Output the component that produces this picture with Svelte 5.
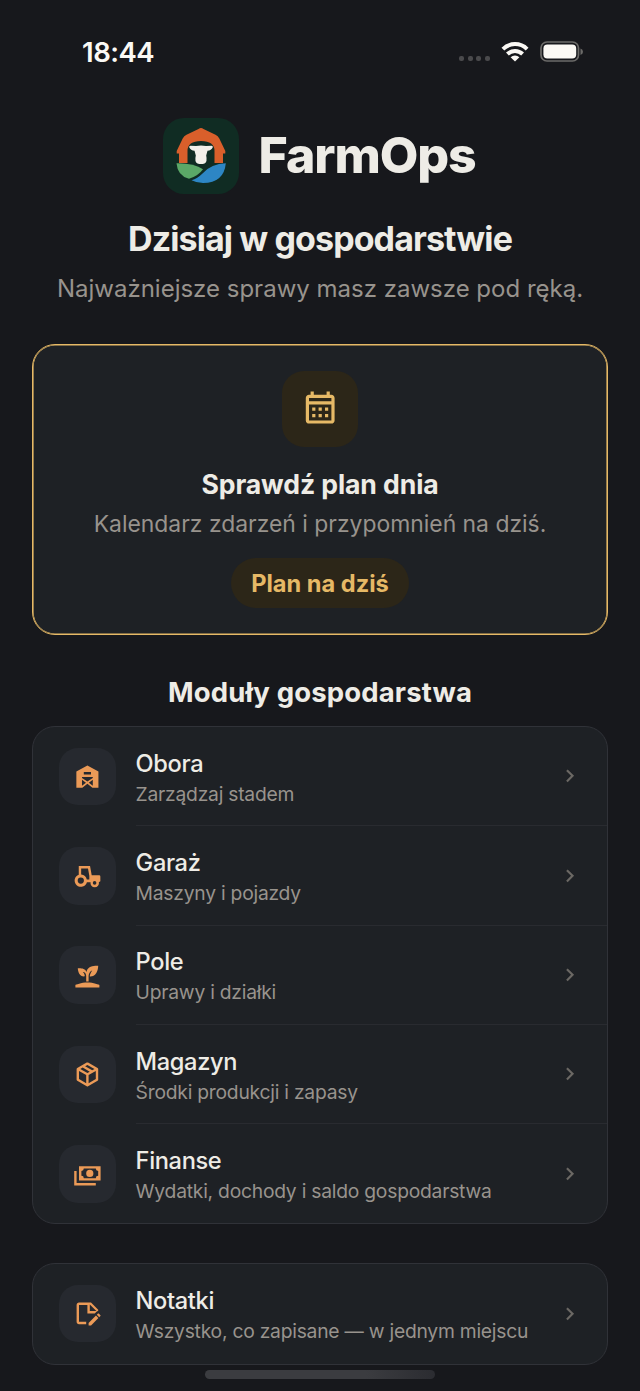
<script lang="ts">
	interface Module {
		title: string;
		subtitle: string;
		icon: string;
	}

	const calendarIcon =
		'M7 11H9V13H7V11M21 5V19C21 20.11 20.11 21 19 21H5C3.89 21 3 20.1 3 19V5C3 3.9 3.9 3 5 3H6V1H8V3H16V1H18V3H19C20.11 3 21 3.9 21 5M5 7H19V5H5V7M19 19V9H5V19H19M15 13V11H17V13H15M11 13V11H13V13H11M7 15H9V17H7V15M15 17V15H17V17H15M11 17V15H13V17H11Z';
	const chevronIcon = 'M8.59,16.58L13.17,12L8.59,7.41L10,6L16,12L10,18L8.59,16.58Z';

	const modules: Module[] = [
		{
			title: 'Obora',
			subtitle: 'Zarządzaj stadem',
			icon: 'M12 3L2.8 8V21.5H21.2V8L12 3M9 8.4H15V10.4H9V8.4M7.5 12.6H16.5V13.4L12 16.2L7.5 13.4V12.6M7.5 14.8L10.8 17.2L7.5 19.8V14.8M16.5 14.8V19.8L13.2 17.2L16.5 14.8M12 18.2L16.2 21.5H7.8L12 18.2Z'
		},
		{
			title: 'Garaż',
			subtitle: 'Maszyny i pojazdy',
			icon: 'M4.8 3.4V10.6A5.2 5.2 0 1 0 11.6 16.8H14.7A3.5 3.5 0 1 0 21.5 16.8L22.8 16V12A1 1 0 0 0 21.8 11H15.6L14.2 3.4H4.8M6.8 5.4H12.5L13.6 11.4V14.5H11.5A5.2 5.2 0 0 0 6.8 10.4V5.4M6.5 12.9A2.6 2.6 0 1 1 6.5 18.1A2.6 2.6 0 1 1 6.5 12.9M18 15.9A1.5 1.5 0 1 1 18 18.9A1.5 1.5 0 1 1 18 15.9Z'
		},
		{
			title: 'Pole',
			subtitle: 'Uprawy i działki',
			icon: 'M2,22V20C2,20 7,18 12,18C17,18 22,20 22,20V22H2M11.3,9.1C10.1,5.2 4,6.1 4,6.1C4,6.1 4.2,13.9 9.9,12.7C9.5,9.8 8,9 8,9C10.8,9 11,12.4 11,12.4V17C11.3,17 11.7,17 12,17C12.3,17 12.7,17 13,17V12.8C13,12.8 13,8.9 16,7.9C16,7.9 14,10.9 14,12.9C21,13.6 21,4 21,4C21,4 12.1,3 11.3,9.1Z'
		},
		{
			title: 'Magazyn',
			subtitle: 'Środki produkcji i zapasy',
			icon: 'M21,16.5C21,16.88 20.79,17.21 20.47,17.38L12.57,21.82C12.41,21.94 12.21,22 12,22C11.79,22 11.59,21.94 11.43,21.82L3.53,17.38C3.21,17.21 3,16.88 3,16.5V7.5C3,7.12 3.21,6.79 3.53,6.62L11.43,2.18C11.59,2.06 11.79,2 12,2C12.21,2 12.41,2.06 12.57,2.18L20.47,6.62C20.79,6.79 21,7.12 21,7.5V16.5M12,4.15L10.11,5.22L16,8.61L17.96,7.5L12,4.15M6.04,7.5L12,10.85L13.96,9.75L8.08,6.35L6.04,7.5M5,15.91L11,19.29V12.58L5,9.21V15.91M19,15.91V9.21L13,12.58V19.29L19,15.91Z'
		},
		{
			title: 'Finanse',
			subtitle: 'Wydatki, dochody i saldo gospodarstwa',
			icon: 'M5,6H23V18H5V6M14,9A3,3 0 0,1 17,12A3,3 0 0,1 14,15A3,3 0 0,1 11,12A3,3 0 0,1 14,9M9,8A2,2 0 0,1 7,10V14A2,2 0 0,1 9,16H19A2,2 0 0,1 21,14V10A2,2 0 0,1 19,8H9M1,10H3V20H19V22H1V10Z'
		}
	];

	const notes: Module = {
		title: 'Notatki',
		subtitle: 'Wszystko, co zapisane — w jednym miejscu',
		icon: 'M18.13 12L19.39 10.74C19.83 10.3 20.39 10.06 21 10V9L15 3H5C3.89 3 3 3.89 3 5V19C3 20.1 3.89 21 5 21H11V19.13L11.13 19H5V5H12V12H18.13M14 4.5L19.5 10H14V4.5M19.13 13.83L21.17 15.87L15.04 22H13V19.96L19.13 13.83M22.85 14.19L21.87 15.17L19.83 13.13L20.81 12.15C21 11.95 21.33 11.95 21.53 12.15L22.85 13.47C23.05 13.67 23.05 14 22.85 14.19Z'
	};
</script>

{#snippet row(item: Module)}
	<div class="row">
		<div class="tile">
			<svg viewBox="0 0 24 24"><path fill-rule="evenodd" d={item.icon} /></svg>
		</div>
		<div class="body">
			<div class="text">
				<span class="title">{item.title}</span>
				<span class="subtitle">{item.subtitle}</span>
			</div>
			<svg class="chevron" viewBox="0 0 24 24"><path d={chevronIcon} /></svg>
		</div>
	</div>
{/snippet}

<div class="screen">
	<header class="status">
		<span class="time">18:44</span>
		<div class="indicators">
			<div class="dots"><i></i><i></i><i></i><i></i></div>
			<svg class="wifi" viewBox="0 0 28 21">
				<g fill="none" stroke="#fbf9f5" stroke-width="4">
					<path d="M1.9 8.1a17.2 17.2 0 0 1 24.2 0" />
					<path d="M6.4 13a10.9 10.9 0 0 1 15.2 0" />
				</g>
				<path fill="#fbf9f5" d="M9.6 16.2a6.4 6.4 0 0 1 8.8 0L14 20.6z" />
			</svg>
			<svg class="battery" viewBox="0 0 44 22">
				<rect x="1" y="1" width="37.5" height="19" rx="6" fill="none" stroke="#6c6b69" stroke-width="1.7" />
				<rect x="3.4" y="3.4" width="32.8" height="14.2" rx="4" fill="#fbf9f5" />
				<path fill="#6c6b69" d="M40.5 7.4q2.5 1 2.5 3.3t-2.5 3.3z" />
			</svg>
		</div>
	</header>

	<div class="brand">
		<svg class="logo" viewBox="0 0 76 76">
			<rect width="76" height="76" rx="21" fill="#102c23" />
			<path
				fill="#d95f2b"
				d="M38 10q1.2 0 2.5.9l12 5.800q2.5 1.3 3.8 3.8L62.3 33v2.5H60V45h-8.500V33q0-10-13.500-10T24.500 33v12H16v-9.500h-2.300V33l6-12.500q1.300-2.500 3.800-3.800l12-5.800q1.300-.9 2.500-.9z"
			/>
			<path
				fill="#f2efe9"
				d="M33 28q5-1 10 0l5.500-.3q1.800.2 1.200 1.800-1.400 3-5.200 3.300l-1.300 4.600q1.400 6.500-1.700 8-3.500 1-7 0-3.200-1.500-1.700-8l-1.300-4.600q-3.800-.3-5.200-3.300-.6-1.600 1.200-1.800z"
			/>
			<path fill="#5ba867" d="M13.5 45.3q18-.2 26.500 6-4.500 6.500-14 9.500Q14.500 58 13.500 45.300z" />
			<path fill="#2d86c4" d="M62.8 45.3Q61 65 40 65q-6 0-11.500-2.800 6-1.700 11-6.700 9-10 23.300-10.200z" />
		</svg>
		<h1>FarmOps</h1>
	</div>

	<h2>Dzisiaj w gospodarstwie</h2>
	<p class="lead">Najważniejsze sprawy masz zawsze pod ręką.</p>

	<section class="plan">
		<div class="plan-icon">
			<svg viewBox="0 0 24 24"><path d={calendarIcon} /></svg>
		</div>
		<h3>Sprawdź plan dnia</h3>
		<p>Kalendarz zdarzeń i przypomnień na dziś.</p>
		<button>Plan na dziś</button>
	</section>

	<h3 class="section-title">Moduły gospodarstwa</h3>
	<section class="list">
		{#each modules as item}
			{@render row(item)}
		{/each}
	</section>

	<section class="list notes">
		{@render row(notes)}
	</section>

	<div class="home-bar"></div>
</div>

<style>
	:global(body) {
		background: #17181c;
	}

	.screen {
		position: relative;
		box-sizing: border-box;
		height: 1391px;
		padding: 0 32px;
		overflow: hidden;
		background: #17181c;
		color: #eeece6;
		font-family: Inter, 'Liberation Sans', sans-serif;
		text-align: center;
	}

	h1,
	h2,
	h3,
	p {
		margin: 0;
		white-space: nowrap;
	}

	.status {
		display: flex;
		align-items: center;
		justify-content: space-between;
		box-sizing: border-box;
		height: 102px;
		padding: 1px 24px 0 50px;
	}
	.time {
		font-size: 27.5px;
		font-weight: 600;
		letter-spacing: -0.5px;
		color: #fbf9f5;
	}
	.indicators {
		display: flex;
		align-items: center;
	}
	.dots {
		display: flex;
		gap: 3.6px;
		margin: 14px 11px 0 0;
	}
	.dots i {
		width: 5px;
		height: 5px;
		border-radius: 2px;
		background: #4a4a4c;
	}
	.wifi {
		width: 28px;
		height: 21px;
		margin-right: 11px;
	}
	.battery {
		width: 44px;
		height: 22px;
	}

	.brand {
		display: flex;
		align-items: center;
		justify-content: center;
		gap: 19px;
		height: 76px;
		margin-top: 16px;
		padding-right: 1px;
	}
	.logo {
		width: 76px;
		height: 76px;
	}
	h1 {
		padding-bottom: 2px;
		font-size: 50px;
		font-weight: 800;
		letter-spacing: -1.1px;
	}

	h2 {
		margin-top: 23px;
		font-size: 34px;
		font-weight: 700;
		line-height: 43px;
		letter-spacing: -0.9px;
	}
	.lead {
		margin-top: 14px;
		font-size: 24px;
		line-height: 30px;
		color: #98938d;
	}

	.plan {
		display: flex;
		flex-direction: column;
		align-items: center;
		box-sizing: border-box;
		height: 291px;
		margin-top: 40px;
		padding-top: 26px;
		border: 1px solid #e6b966;
		border-radius: 23px;
		background: #1e2125;
		box-shadow: inset 0 0 0 0.6px #e6b966;
	}
	.plan-icon {
		display: grid;
		place-items: center;
		width: 76px;
		height: 76px;
		border-radius: 22px;
		background: #2c2618;
	}
	.plan-icon svg {
		width: 38.4px;
		height: 38.4px;
		fill: #e6b966;
	}
	h3 {
		font-size: 27.5px;
		font-weight: 700;
		line-height: 34px;
		letter-spacing: 0.15px;
	}
	.plan h3 {
		margin-top: 20px;
		font-size: 26.6px;
		letter-spacing: -0.1px;
	}
	.plan p {
		margin-top: 9px;
		font-size: 22.9px;
		line-height: 28px;
		color: #98938d;
	}
	.plan button {
		height: 50px;
		margin-top: 20px;
		padding: 0 20px;
		border: 0;
		border-radius: 25px;
		background: #2c2618;
		color: #e6b966;
		font: 700 23.6px Inter, sans-serif;
	}

	.section-title {
		margin-top: 40px;
	}

	.list {
		box-sizing: border-box;
		height: 498px;
		margin-top: 17px;
		border: 1px solid #303238;
		border-radius: 23px;
		background: #1e2125;
		text-align: left;
	}
	.notes {
		height: 102px;
		margin-top: 39px;
	}
	.row {
		display: flex;
		align-items: center;
		gap: 19.5px;
		height: 99.3px;
		padding-left: 25.5px;
	}
	.tile {
		display: grid;
		place-items: center;
		flex: none;
		width: 57.6px;
		height: 57.6px;
		border-radius: 19px;
		background: #26292f;
	}
	.tile svg {
		width: 28.8px;
		height: 28.8px;
		fill: #eb9a57;
	}
	.body {
		display: flex;
		flex: 1;
		align-items: center;
		justify-content: space-between;
		box-sizing: border-box;
		height: 100%;
		padding-right: 24px;
		border-bottom: 1px solid #292b30;
	}
	.row:last-child .body {
		border-bottom: 0;
	}
	.text {
		display: flex;
		flex-direction: column;
		padding-top: 4px;
		white-space: nowrap;
	}
	.title {
		font-size: 23.6px;
		font-weight: 500;
		line-height: 32px;
		letter-spacing: -0.35px;
	}
	.subtitle {
		font-size: 19.3px;
		line-height: 29px;
		letter-spacing: -0.24px;
		color: #98938d;
	}
	.chevron {
		width: 25.6px;
		height: 25.6px;
		fill: #6b6864;
	}

	.home-bar {
		position: absolute;
		bottom: 12px;
		left: 205px;
		width: 230px;
		height: 9px;
		border-radius: 5px;
		background: linear-gradient(90deg, #3b3c40 70%, #2b2c31);
	}
</style>
